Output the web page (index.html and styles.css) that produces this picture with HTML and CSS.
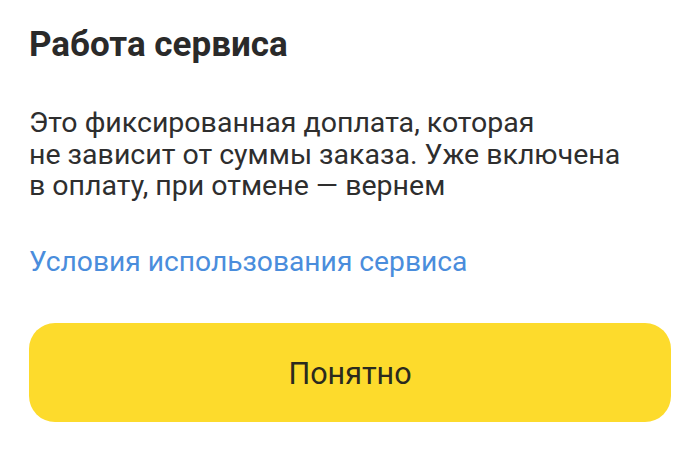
FILE: index.html
```html
<!DOCTYPE html>
<html lang="ru">
<head>
    <meta charset="UTF-8">
    <meta name="viewport" content="width=device-width, initial-scale=1.0">
    <title>Работа сервиса</title>
    <link rel="stylesheet" href="styles.css">
</head>
<body>
    <div class="sheet">
        <h2 class="sheet-title">Работа сервиса</h2>
        <p class="sheet-text">Это фиксированная доплата, которая<br>не зависит от суммы заказа. Уже включена<br>в оплату, при отмене — вернем</p>
        <a class="sheet-link" href="#">Условия использования сервиса</a>
        <button class="sheet-button" type="button">Понятно</button>
    </div>
</body>
</html>
```

FILE: styles.css
```css
body {
    margin: 0;
    background: #fff;
    font-family: Roboto, "Noto Sans", Arial, sans-serif;
}
.sheet {
    display: flex;
    flex-direction: column;
    align-items: flex-start;
    padding: 25px 29px 0 29px;
}
.sheet-title {
    margin: 0;
    font-size: 35px;
    font-weight: 700;
    line-height: 40px;
    color: #2a2a2a;
}
.sheet-text {
    margin: 42px 0 0 0;
    font-size: 28.5px;
    line-height: 31.5px;
    color: #2e2e2e;
}
.sheet-link {
    margin-top: 44px;
    font-size: 28.2px;
    line-height: 32px;
    color: #4a8ddc;
    text-decoration: none;
}
.sheet-button {
    margin-top: 45px;
    width: 100%;
    height: 99px;
    padding-top: 4px;
    border: none;
    border-radius: 26px;
    background: #fddb2c;
    color: #2b2a1e;
    font-family: inherit;
    font-size: 30.5px;
    cursor: pointer;
}
```
